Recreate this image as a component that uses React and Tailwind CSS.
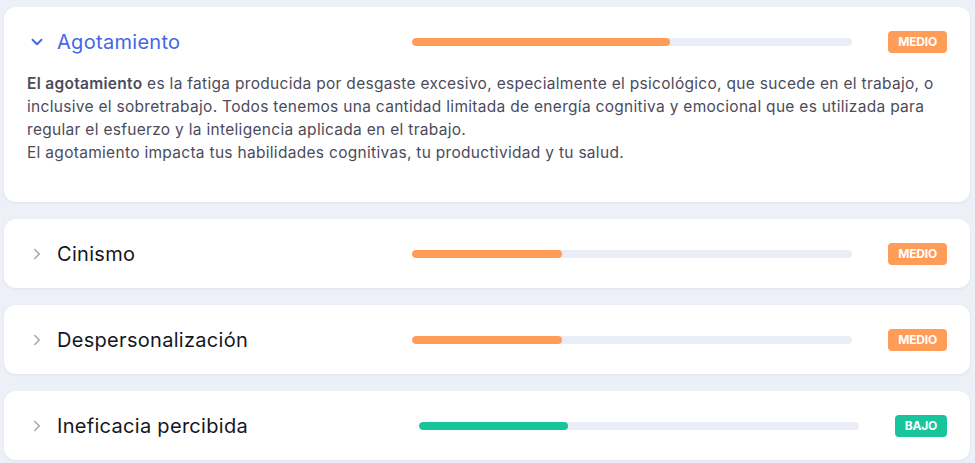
import React, { useState } from 'react';
import { ChevronDown, ChevronRight } from 'lucide-react';

const dimensions = [
  {
    id: 'agotamiento',
    title: 'Agotamiento',
    value: 58.6,
    level: 'MEDIO',
  },
  { id: 'cinismo', title: 'Cinismo', value: 34, level: 'MEDIO' },
  { id: 'despersonalizacion', title: 'Despersonalización', value: 34, level: 'MEDIO' },
  { id: 'ineficacia', title: 'Ineficacia percibida', value: 34, level: 'BAJO' },
];

function LevelBadge({ level }) {
  const color = level === 'BAJO' ? 'bg-[#17c49b]' : 'bg-[#ff9c58]';
  return (
    <span className={`${color} text-white text-[12px] font-bold leading-none px-[10px] py-[5px] rounded-[4px] tracking-[-0.2px]`}>
      {level}
    </span>
  );
}

function DimensionCard({ item, open, onToggle }) {
  const fill = item.level === 'BAJO' ? 'bg-[#17c49b]' : 'bg-[#ff9c58]';

  return (
    <div className="bg-white rounded-xl shadow-[0_1px_3px_rgba(60,70,120,0.08)]">
      <button
        onClick={onToggle}
        className="w-full h-[69px] flex items-center pl-[24px] pr-[23px] text-left"
      >
        {open ? (
          <ChevronDown className="w-[18px] h-[18px] text-[#4466e6]" strokeWidth={2.5} />
        ) : (
          <ChevronRight className="w-[18px] h-[18px] text-[#a3a5b6]" strokeWidth={2} />
        )}
        <span className={`ml-[11px] text-[20px] tracking-[0.3px] ${open ? 'text-[#4466e6]' : 'text-[#16161f]'}`}>
          {item.title}
        </span>

        <div className="ml-auto mr-9 w-[440px] h-2 rounded-full bg-[#ebedf6] overflow-hidden">
          <div className={`${fill} h-full rounded-full`} style={{ width: `${item.value}%` }} />
        </div>
        <LevelBadge level={item.level} />
      </button>

      {open && (
        <div className="px-[23px] pb-[38px] -mt-[4px] text-[15.5px] leading-[23px] tracking-[0.3px] text-[#4b4b5c] whitespace-nowrap">
          <p>
            <span className="font-semibold">El agotamiento</span> es la fatiga producida por desgaste excesivo, especialmente el psicológico, que sucede en el trabajo, o
            <br />
            inclusive el sobretrabajo. Todos tenemos una cantidad limitada de energía cognitiva y emocional que es utilizada para
            <br />
            regular el esfuerzo y la inteligencia aplicada en el trabajo.
          </p>
          <p>El agotamiento impacta tus habilidades cognitivas, tu productividad y tu salud.</p>
        </div>
      )}
    </div>
  );
}

export default function App() {
  const [openId, setOpenId] = useState('agotamiento');

  return (
    <div className="min-h-screen bg-[#eef0f8] px-[4px] pt-[7px] pb-2 font-['Inter',sans-serif]">
      <div className="w-[966px] flex flex-col gap-[17px]">
        {dimensions.map((item) => (
          <DimensionCard
            key={item.id}
            item={item}
            open={openId === item.id}
            onToggle={() => setOpenId(openId === item.id ? null : item.id)}
          />
        ))}
      </div>
    </div>
  );
}
